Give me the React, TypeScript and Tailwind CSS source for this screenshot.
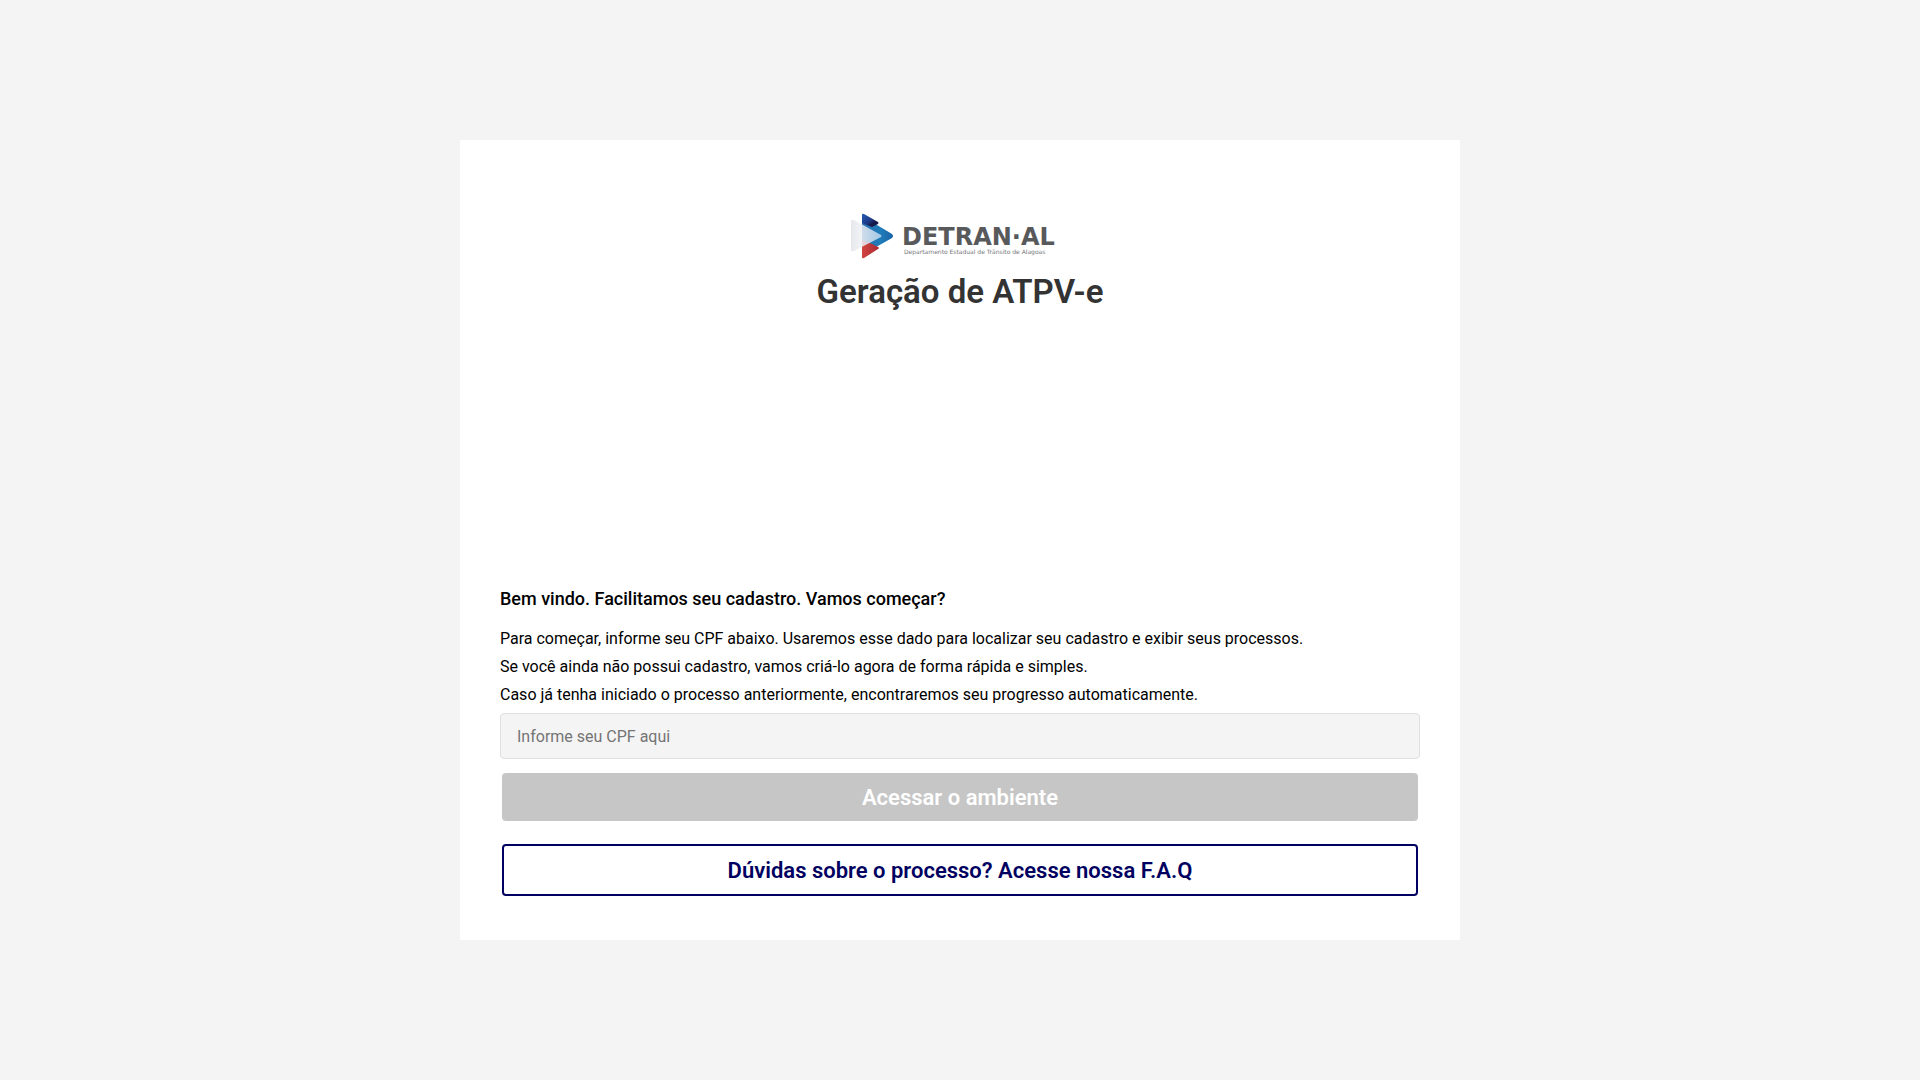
import { useState } from "react";

const INTRO = [
  "Para começar, informe seu CPF abaixo. Usaremos esse dado para localizar seu cadastro e exibir seus processos.",
  "Se você ainda não possui cadastro, vamos criá-lo agora de forma rápida e simples.",
  "Caso já tenha iniciado o processo anteriormente, encontraremos seu progresso automaticamente.",
];

function Logo() {
  return (
    <svg width="240" height="70" viewBox="0 0 240 70" role="img" aria-label="DETRAN-AL">
      <defs>
        <linearGradient id="navy" x1="0" y1="0" x2="1" y2="1">
          <stop offset="0.1" stopColor="#2456ad" />
          <stop offset="0.5" stopColor="#1d3a86" />
          <stop offset="0.7" stopColor="#161a48" />
        </linearGradient>
        <linearGradient id="blue" x1="0" y1="0" x2="1" y2="0">
          <stop offset="0" stopColor="#2c6fae" />
          <stop offset="0.6" stopColor="#1f7cba" />
          <stop offset="1" stopColor="#1a63a6" />
        </linearGradient>
        <linearGradient id="red" x1="0" y1="0" x2="1" y2="0">
          <stop offset="0" stopColor="#d2453f" />
          <stop offset="1" stopColor="#a92a35" />
        </linearGradient>
        <linearGradient id="glass" x1="0" y1="0" x2="1" y2="0">
          <stop offset="0" stopColor="#e4e5e8" stopOpacity="0.9" />
          <stop offset="0.35" stopColor="#eef1f5" stopOpacity="0.85" />
          <stop offset="1" stopColor="#c3dcf0" stopOpacity="0.8" />
        </linearGradient>
      </defs>
      <path d="M22 16l30 18q2 2 0 4L22 55z" fill="url(#blue)" />
      <path d="M22 15q0-2 2-1l14 8q1 1 0 2l-6 3-10-4z" fill="url(#navy)" />
      <path d="M22 40l10 4 6 3q2 1 0 2l-14 9q-2 1-2-1z" fill="url(#red)" />
      <path d="M11 21q0-2 3-1l27 15q1 1 0 2L14 51q-3 1-3-1z" fill="url(#glass)" />
      <text x="62" y="45" fontFamily="DejaVu Sans" fontWeight="700" fontSize="24" fill="#58595b">DETRAN·AL</text>
      <text x="64" y="54" fontFamily="DejaVu Sans" fontSize="6" fill="#77787a">
        Departamento Estadual de Trânsito de Alagoas
      </text>
    </svg>
  );
}

export default function App() {
  const [cpf, setCpf] = useState("");

  return (
    <div className="flex min-h-screen items-center justify-center bg-[#f4f4f4] font-[Roboto,sans-serif] text-black">
      <main className="flex min-h-[800px] w-full max-w-[1000px] flex-col justify-between bg-white px-10 pt-15 pb-11">
        {/* Logo and title */}
        <header className="flex flex-col items-center">
          <Logo />
          <h1 className="text-[33px] leading-11 font-semibold text-[#333]">Geração de ATPV-e</h1>
        </header>

        {/* CPF form */}
        <form className="flex flex-col" onSubmit={(e) => e.preventDefault()}>
          <h2 className="mb-3 text-lg leading-7 font-medium">Bem vindo. Facilitamos seu cadastro. Vamos começar?</h2>
          <label htmlFor="cpf" className="mb-1 text-base leading-7">
            {INTRO.map((line) => (
              <span key={line} className="block">{line}</span>
            ))}
          </label>
          <input
            id="cpf"
            value={cpf}
            onChange={(e) => setCpf(e.target.value)}
            placeholder="Informe seu CPF aqui"
            className="h-[46px] rounded border border-[#e0e0e0] bg-[#f4f4f4] px-4 text-base placeholder:text-[#757575]"
          />
          <button
            type="submit"
            disabled={!cpf}
            className="mx-0.5 mt-3.5 h-12 rounded bg-[#000060] text-[22px] font-semibold text-white disabled:bg-[#c6c6c6]"
          >
            Acessar o ambiente
          </button>
          <button
            type="button"
            className="mx-0.5 mt-[23px] h-[52px] rounded border-2 border-[#000060] bg-white text-[22px] font-semibold text-[#000060]"
          >
            Dúvidas sobre o processo? Acesse nossa F.A.Q
          </button>
        </form>
      </main>
    </div>
  );
}
